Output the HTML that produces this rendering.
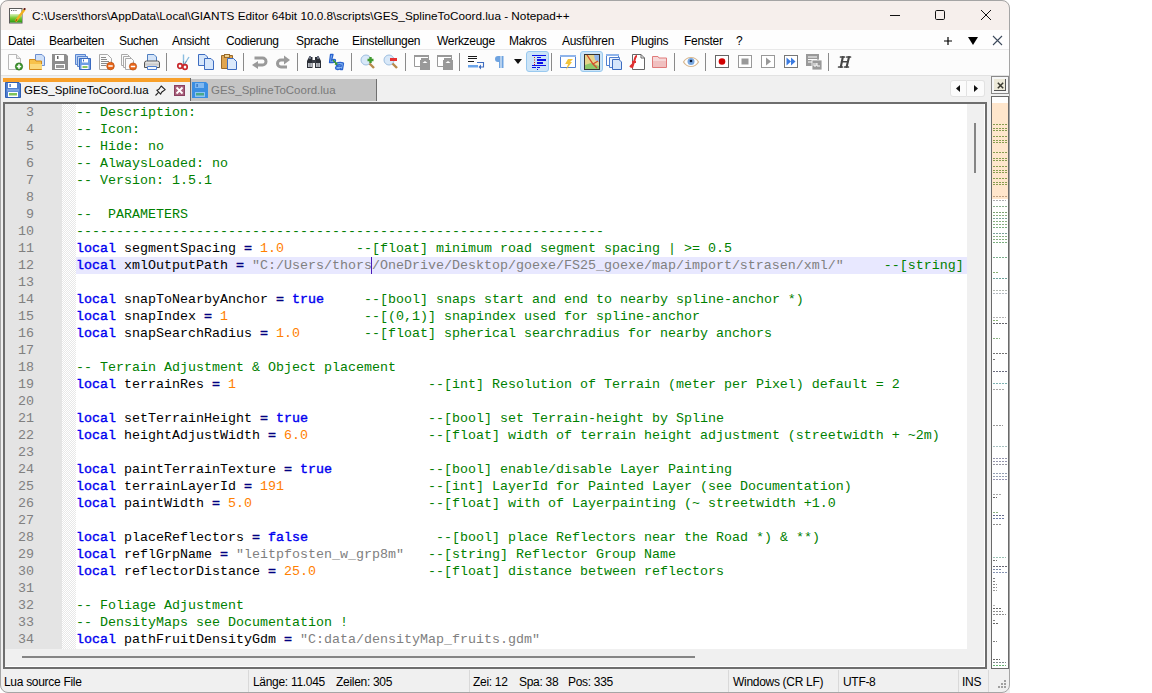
<!DOCTYPE html>
<html><head><meta charset="utf-8">
<style>
*{box-sizing:border-box}
html,body{margin:0;padding:0}
body{width:1152px;height:693px;background:#fff;position:relative;overflow:hidden;font-family:"Liberation Sans",sans-serif;font-size:11.5px;color:#000}
.a{position:absolute}
svg{position:absolute;overflow:visible}
#win{left:0;top:0;width:1010px;height:693px;background:#f0f0f0;border-radius:8px 8px 0 8px;overflow:hidden}
#wborder{left:0;top:0;width:1010px;height:693px;border:1px solid #a5a5a5;border-bottom-width:1px;border-radius:8px 8px 8px 8px;pointer-events:none}
#title{left:0;top:0;width:1010px;height:30px;background:#f6efec}
#ttext{left:32px;top:9px;font-size:11.75px;color:#000;white-space:nowrap}
#menu{left:0;top:30px;width:1010px;height:19px;background:#fefefe}
#menu span{position:absolute;top:4px;white-space:nowrap;font-size:12px;letter-spacing:-0.3px}
#tool{left:0;top:49px;width:1010px;height:27px;background:#fcfcfc;border-top:1px solid #e9e9e9;border-bottom:1px solid #e2e2e2}
.tsep{position:absolute;top:5px;width:1px;height:18px;background:#8a8a8a}
#tabs{left:0;top:76px;width:1010px;height:26px;background:#f0f0f0}
#frame{left:3px;top:102px;width:984px;height:567px;border:2px solid #6e6e6e;background:#fff}
#lnm{left:5px;top:104px;width:57px;height:545px;background:#e4e4e4}
#fold{left:62px;top:104px;width:14px;height:545px;background-color:#fff;background-image:linear-gradient(45deg,#e8e8e8 25%,transparent 25%,transparent 75%,#e8e8e8 75%),linear-gradient(45deg,#e8e8e8 25%,transparent 25%,transparent 75%,#e8e8e8 75%);background-size:2px 2px;background-position:0 0,1px 1px}
#code{left:76px;top:104px;width:891px;height:545px;overflow:hidden;font-family:"Liberation Mono",monospace;font-size:13.333px;line-height:17px;white-space:pre;color:#000}
#code div{height:17px}
#code div.cur{background:#e8e8ff}
#nums{left:4px;top:104px;width:30px;font-family:"Liberation Mono",monospace;font-size:13.333px;line-height:17px;color:#808080;text-align:right}
#nums div{height:17px}
i{font-style:normal}
i.c{color:#008000}
i.k{color:#0000f0;font-weight:normal;-webkit-text-stroke:0.4px #0000f0}
i.o{color:#000080;font-weight:normal;-webkit-text-stroke:0.4px #000080}
i.n{color:#ff8000}
i.s{color:#808080}
#caret{left:371px;top:257px;width:1px;height:17px;background:#4a1ab8}
#vsb{left:967px;top:104px;width:17px;height:545px;background:#f0f0f0}
#vthumb{left:974px;top:123px;width:2px;height:50px;background:#858585}
#hsb{left:5px;top:649px;width:979px;height:17px;background:#f0f0f0}
#wl1{left:984px;top:104px;width:1px;height:563px;background:#fff}
#wl2{left:5px;top:666px;width:980px;height:1px;background:#fff}
#hthumb{left:22px;top:656px;width:673px;height:2px;background:#858585}
#status{left:0;top:669px;width:1010px;height:24px;background:#f0f0f0}
#status span{position:absolute;top:6px;white-space:nowrap;font-size:12px;letter-spacing:-0.3px}
.sep{position:absolute;top:1px;width:1px;height:22px;background:#d9d9d9}
#dmap{left:991px;top:96px;width:18px;height:573px;border:1px solid #6a6a6a;background:#fff;overflow:hidden}
#dmap div{opacity:0.8}
</style></head><body>
<div id="win" class="a">
  <div id="title" class="a">
    <svg style="left:9px;top:7px" width="17" height="17" viewBox="0 0 17 17">
      <defs><linearGradient id="gg" x1="0" y1="0" x2="0" y2="1"><stop offset="0" stop-color="#d8f0b8"/><stop offset="0.45" stop-color="#7ccc3a"/><stop offset="1" stop-color="#2a9a10"/></linearGradient></defs>
      <rect x="0.5" y="1.5" width="12.5" height="14.5" fill="#fff" stroke="#5a5a5a"/>
      <rect x="1" y="7" width="12" height="8.5" fill="url(#gg)"/>
      <path d="M2 3.5h1.2M4.2 3.5h1.2M6.4 3.5h1.2" stroke="#666" stroke-width="1"/>
      <path d="M6.5 14.5 L15.5 2.5" stroke="#f0b020" stroke-width="2.4"/>
      <path d="M6.5 14.5 L8 12.3" stroke="#8a5a10" stroke-width="1.2"/>
      <circle cx="15.6" cy="2" r="1.1" fill="#5a0a0a"/>
    </svg>
    <div id="ttext" class="a">C:\Users\thors\AppData\Local\GIANTS Editor 64bit 10.0.8\scripts\GES_SplineToCoord.lua - Notepad++</div>
    <svg style="left:890px;top:10px" width="10" height="10" viewBox="0 0 10 10"><path d="M0 5.5H10" stroke="#111" stroke-width="1"/></svg>
    <svg style="left:935px;top:10px" width="10" height="10" viewBox="0 0 10 10"><rect x="0.5" y="0.5" width="9" height="9" rx="1.2" fill="none" stroke="#111" stroke-width="1"/></svg>
    <svg style="left:981px;top:10px" width="10" height="10" viewBox="0 0 10 10"><path d="M0 0L10 10M10 0L0 10" stroke="#111" stroke-width="1"/></svg>
  </div>
  <div id="menu" class="a">
    <span style="left:8px">Datei</span>
    <span style="left:49px">Bearbeiten</span>
    <span style="left:119px">Suchen</span>
    <span style="left:172px">Ansicht</span>
    <span style="left:226px">Codierung</span>
    <span style="left:296px">Sprache</span>
    <span style="left:352px">Einstellungen</span>
    <span style="left:437px">Werkzeuge</span>
    <span style="left:509px">Makros</span>
    <span style="left:562px">Ausführen</span>
    <span style="left:631px">Plugins</span>
    <span style="left:684px">Fenster</span>
    <span style="left:736px">?</span>
    <svg style="left:944px;top:7px" width="8" height="8" viewBox="0 0 8 8"><path d="M4 0V8M0 4H8" stroke="#000" stroke-width="1.2"/></svg>
    <svg style="left:968px;top:7px" width="10" height="8" viewBox="0 0 10 8"><path d="M0 0H10L5 8Z" fill="#000"/></svg>
    <svg style="left:993px;top:6px" width="9" height="9" viewBox="0 0 9 9"><path d="M0 0L9 9M9 0L0 9" stroke="#3d4a5c" stroke-width="1.1"/></svg>
  </div>
  <div id="tool" class="a"></div>
  <svg style="left:7px;top:54px" width="16" height="16" viewBox="0 0 16 16"><path d="M1.5 0.5H9.5L13.5 4.5V15.5H1.5Z" fill="#fdfdfd" stroke="#b8b8b8"/><path d="M9.5 0.5V4.5H13.5" fill="#e8e8e8" stroke="#b8b8b8"/><circle cx="12" cy="12.5" r="3.6" fill="#3c9a2c" stroke="#2a6e1e" stroke-width="0.8"/><path d="M12 10.3V14.7M9.8 12.5H14.2" stroke="#fff" stroke-width="1.6"/></svg>
<svg style="left:29px;top:54px" width="16" height="16" viewBox="0 0 16 16"><path d="M6.5 0.5H13L15.5 3V11.5H6.5Z" fill="#cfe0f8" stroke="#6d8fd0"/><path d="M0.5 5.5H6L7 7H12.5V15.5H0.5Z" fill="#f7c24a" stroke="#d08a1c"/><path d="M1 10H13V15H1Z" fill="#fbd97a"/></svg>
<svg style="left:52px;top:54px" width="16" height="16" viewBox="0 0 16 16"><path d="M0 0H14L16 2V16H0Z" fill="#8e8e8e"/><rect x="3" y="1" width="9" height="6" fill="#fff"/><rect x="5" y="2" width="1.5" height="3" fill="#666"/><rect x="3" y="10" width="10" height="5" fill="#fff"/><rect x="4" y="11" width="8" height="3" fill="#9a9a9a"/></svg>
<svg style="left:75px;top:54px" width="16" height="16" viewBox="0 0 16 16"><path d="M0.5 0.5H10.5V10.5H0.5Z" fill="#b8d0f4" stroke="#5a86d0"/><path d="M2.5 2.5H12.5V12.5H2.5Z" fill="#c0d6f4" stroke="#5a86d0"/><path d="M4.5 4.5H15.5V15.5H4.5Z" fill="#6d9ee4" stroke="#3a6ac0"/><rect x="7" y="5" width="6" height="3.5" fill="#fff"/><rect x="8" y="5.5" width="1" height="2" fill="#3a6ac0"/><rect x="6.5" y="11" width="7" height="4" fill="#fff"/><rect x="7.5" y="12" width="5" height="2" fill="#8cc860"/></svg>
<svg style="left:99px;top:54px" width="16" height="16" viewBox="0 0 16 16"><path d="M0.5 0.5H8.5L12.5 4.5V15.5H0.5Z" fill="#fbfbfb" stroke="#a9a9a9"/><path d="M2 3.5H7M2 5.5H8M2 7.5H10M2 9.5H8M2 11.5H7" stroke="#8a8a8a" stroke-width="1"/><circle cx="11.5" cy="12" r="3.8" fill="#e8661a" stroke="#b54a0c" stroke-width="0.7"/><path d="M9.3 12H13.7" stroke="#fff" stroke-width="1.6"/></svg>
<svg style="left:121px;top:54px" width="16" height="16" viewBox="0 0 16 16"><path d="M0.5 0.5H6.5L8.5 2.5V11.5H0.5Z" fill="#fbfbfb" stroke="#aaa"/><path d="M2.5 2.5H8.5L10.5 4.5V13.5H2.5Z" fill="#fbfbfb" stroke="#aaa"/><path d="M4.5 4.5H10.5L12.5 6.5V15.5H4.5Z" fill="#fbfbfb" stroke="#aaa"/><circle cx="12" cy="12.5" r="3.6" fill="#e8661a" stroke="#b54a0c" stroke-width="0.7"/><path d="M9.8 12.5H14.2" stroke="#fff" stroke-width="1.6"/></svg>
<svg style="left:144px;top:54px" width="16" height="16" viewBox="0 0 16 16"><defs><linearGradient id="pg" x1="0" y1="0" x2="0" y2="1"><stop offset="0" stop-color="#fafafa"/><stop offset="0.5" stop-color="#c8c8c8"/><stop offset="1" stop-color="#eee"/></linearGradient></defs><path d="M3.5 0.5H10L12.5 3V7.5H3.5Z" fill="#d4e4f8" stroke="#4f7fc0"/><path d="M0.5 9A2 2 0 0 1 2.5 7H13.5A2 2 0 0 1 15.5 9V13.5H0.5Z" fill="url(#pg)" stroke="#555"/><path d="M3.5 12.5H12.5V15.5H3.5Z" fill="#f4f8fc" stroke="#4f7fd0"/></svg>
<div class="tsep" style="left:166px;top:53px"></div>
<svg style="left:175px;top:54px" width="16" height="16" viewBox="0 0 16 16"><path d="M8.5 0.5V11M14 3L9 11" stroke="#8abde0" stroke-width="1.4"/><path d="M8.5 7V11M11.5 7L9 11" stroke="#6a8aa0" stroke-width="0.7"/><ellipse cx="5" cy="12" rx="2.2" ry="2.4" fill="none" stroke="#c8282c" stroke-width="1.7"/><ellipse cx="10" cy="13" rx="2.2" ry="2.4" fill="none" stroke="#c8282c" stroke-width="1.7"/></svg>
<svg style="left:198px;top:54px" width="16" height="16" viewBox="0 0 16 16"><path d="M0.5 0.5H7L9.5 3V11.5H0.5Z" fill="#d6e6fa" stroke="#3d6cc0"/><path d="M6.5 4.5H13L15.5 7V15.5H6.5Z" fill="#d6e6fa" stroke="#3d6cc0"/></svg>
<svg style="left:221px;top:54px" width="16" height="16" viewBox="0 0 16 16"><path d="M0.5 1.5H11.5V14.5H0.5Z" fill="#e0a550" stroke="#9a6a2a"/><rect x="3.5" y="0.5" width="5" height="3" fill="#f2d28c" stroke="#9a6a2a"/><path d="M6.5 4.5H12.5L15.5 7.5V15.5H6.5Z" fill="#dbe9fb" stroke="#3d6cc0"/></svg>
<div class="tsep" style="left:243px;top:53px"></div>
<svg style="left:252px;top:54px" width="16" height="16" viewBox="0 0 16 16"><path d="M2.5 4H10.5A3.5 3.5 0 0 1 10.5 11H6" fill="none" stroke="#9a9a9a" stroke-width="3"/><path d="M0 11L6 7V15Z" fill="#9a9a9a"/></svg>
<svg style="left:275px;top:54px" width="16" height="16" viewBox="0 0 16 16"><path d="M10 6H6A3.5 3.5 0 0 0 6 13H12" fill="none" stroke="#9a9a9a" stroke-width="3"/><path d="M15 6L9 1.5V10.5Z" fill="#9a9a9a"/></svg>
<div class="tsep" style="left:297px;top:53px"></div>
<svg style="left:307px;top:56px" width="14" height="12" viewBox="0 0 14 12"><path d="M1 3L2 1H5.5V12H0V5Z" fill="#2a2e36"/><path d="M13 3L12 1H8V12H14V5Z" fill="#2a2e36"/><rect x="5" y="4" width="4" height="3" fill="#3a3e46"/><rect x="1" y="7" width="4" height="4" fill="#b8bcc4"/><rect x="9" y="7" width="4" height="4" fill="#b8bcc4"/><path d="M3 7V11M11 7V11" stroke="#666" stroke-width="0.6"/><rect x="2" y="0" width="2" height="3" fill="#6a7080"/><rect x="10" y="0" width="2" height="3" fill="#6a7080"/></svg>
<svg style="left:329px;top:54px" width="16" height="16" viewBox="0 0 16 16"><path d="M1.5 0.5H4L2.5 6.5C3.5 5.2 6.5 5 6.5 6.5C6.5 8 5.5 8.5 3.5 8.5H0.5Z" fill="#8ab8f0" stroke="#2a64d0" stroke-width="1.3" stroke-linejoin="round"/><path d="M7 9.5C9 8 14.5 8 14.5 9.5L13.5 15.5H11.5L11.8 14.5C10 16 6.5 15.8 6.5 14C6.5 12.5 9 12 12 12.3L12.3 11C11 10.5 9 10.8 7.5 11.5Z" fill="#8ab8f0" stroke="#2a64d0" stroke-width="1.3" stroke-linejoin="round"/><path d="M4 6L7.5 10" stroke="#3a9a2a" stroke-width="1.4"/><path d="M8.5 11L5.5 10.5L8 8Z" fill="#3a9a2a"/></svg>
<div class="tsep" style="left:351px;top:53px"></div>
<svg style="left:360px;top:54px" width="16" height="16" viewBox="0 0 16 16"><circle cx="6" cy="6" r="5" fill="#d8e8f8" stroke="#9fbfe0"/><path d="M9.5 9.5L14 14" stroke="#b88a4a" stroke-width="2.4"/><path d="M10.5 3V9M7.5 6H13.5" stroke="#3f9a2e" stroke-width="2.4"/></svg>
<svg style="left:383px;top:54px" width="16" height="16" viewBox="0 0 16 16"><circle cx="6" cy="6" r="5" fill="#d8e8f8" stroke="#9fbfe0"/><path d="M9.5 9.5L14 14" stroke="#b88a4a" stroke-width="2.4"/><rect x="7" y="4" width="7" height="3" fill="#e53030"/></svg>
<div class="tsep" style="left:405px;top:53px"></div>
<svg style="left:414px;top:54px" width="16" height="16" viewBox="0 0 16 16"><path d="M0.5 1.5H14.5V12.5H0.5Z" fill="#fff" stroke="#999"/><rect x="0" y="1" width="15" height="2" fill="#999"/><rect x="6" y="6" width="10" height="10" fill="#999"/><rect x="7" y="4" width="7" height="2" fill="#999"/><path d="M8.5 9L11 7L13.5 9Z" fill="#fff"/></svg>
<svg style="left:437px;top:54px" width="16" height="16" viewBox="0 0 16 16"><path d="M0.5 1.5H14.5V12.5H0.5Z" fill="#fff" stroke="#999"/><rect x="0" y="1" width="15" height="2" fill="#999"/><rect x="6" y="6" width="10" height="10" fill="#999"/><rect x="7" y="4" width="7" height="2" fill="#999"/><path d="M8.5 9L11 7L13.5 9Z" fill="#fff"/></svg>
<div class="tsep" style="left:459px;top:53px"></div>
<svg style="left:468px;top:54px" width="16" height="16" viewBox="0 0 16 16"><path d="M0 2.5H9M0 4.5H9M0 7.5H6" stroke="#1a1a1a" stroke-width="1"/><rect x="0" y="11" width="10" height="2.5" fill="#6aa4ea"/><path d="M9 8.5H15.5V13H12" fill="none" stroke="#3d6cc0" stroke-width="1.1"/><path d="M10.5 13L13 10.5V15.5Z" fill="#3d6cc0"/></svg>
<svg style="left:491px;top:54px" width="16" height="16" viewBox="0 0 16 16"><path d="M9 2H7A3 3 0 0 0 7 8H8V14H9.5V2Z" fill="#6ea3e0"/><rect x="10.5" y="2" width="2" height="12" fill="#6ea3e0"/></svg>
<svg style="left:514px;top:59px" width="8" height="5" viewBox="0 0 8 5"><path d="M0 0H8L4 5Z" fill="#111"/></svg>
<div class="a" style="left:526px;top:51px;width:23px;height:21px;background:#cce4f7;border:1px solid #99c9ef;border-radius:3px"></div>
<svg style="left:531px;top:54px" width="16" height="16" viewBox="0 0 16 16"><g fill="#0a10e8"><rect x="1" y="1" width="14" height="1"/><rect x="6" y="3" width="4" height="1"/><rect x="6" y="5" width="9" height="2"/><rect x="6" y="8" width="6" height="2"/><rect x="1" y="11" width="14" height="1"/><rect x="1" y="13" width="4" height="1"/><rect x="6" y="13" width="3" height="1"/><rect x="6" y="15" width="1" height="1"/></g><g fill="#d02020"><rect x="3" y="3" width="1" height="1"/><rect x="3" y="5.5" width="1" height="1"/><rect x="3" y="8" width="1" height="1"/><rect x="3" y="10" width="1" height="1"/></g></svg>
<div class="tsep" style="left:551px;top:53px"></div>
<svg style="left:560px;top:54px" width="16" height="16" viewBox="0 0 16 16"><path d="M0.5 1.5H15.5V13.5H0.5Z" fill="#fff" stroke="#4f7fd0"/><rect x="0" y="1" width="16" height="2" fill="#8fb4ea"/><path d="M4 12L8 5H13L10 8H12L6 16L8 10H5Z" fill="#f2c33a"/></svg>
<div class="a" style="left:580px;top:51px;width:23px;height:21px;background:#cce4f7;border:1px solid #99c9ef;border-radius:3px"></div>
<svg style="left:584px;top:54px" width="16" height="16" viewBox="0 0 16 16"><rect x="0.5" y="0.5" width="15" height="15" fill="#e6d48a" stroke="#333"/><path d="M1 11L7 9L15 12V15H1Z" fill="#8cc86a"/><path d="M10 1H15V8L11 6Z" fill="#8fb4ea"/><path d="M3 1L9 10L13 14M9 10L14 7" stroke="#d44a2a" stroke-width="1.3" fill="none"/></svg>
<svg style="left:606px;top:54px" width="16" height="16" viewBox="0 0 16 16"><path d="M0.5 0.5H12.5V11.5H0.5Z" fill="#fff" stroke="#4f7fd0"/><rect x="0" y="0" width="13" height="2" fill="#8fb4ea"/><path d="M3.5 3.5H13.5V13.5H3.5Z" fill="#eaf2fd" stroke="#4f7fd0"/><path d="M6.5 5.5H13L15.5 8V15.5H6.5Z" fill="#d6e6fa" stroke="#3d6cc0"/></svg>
<svg style="left:629px;top:54px" width="16" height="16" viewBox="0 0 16 16"><path d="M3.5 0.5H12L15.5 4V15.5H3.5Z" fill="#fff" stroke="#666"/><path d="M12 0.5V4H15.5" fill="none" stroke="#666"/><path d="M1 13L4 10M8 2C6 2 6 5 5 8L3 14M3 8H7" stroke="#e03030" stroke-width="2" fill="none"/></svg>
<svg style="left:652px;top:54px" width="16" height="16" viewBox="0 0 16 16"><path d="M0.5 2.5H6L7 4H14.5V13.5H0.5Z" fill="#f6d8d8" stroke="#e07a7a"/><rect x="1" y="7" width="13" height="6" fill="#f0c0c0"/></svg>
<div class="tsep" style="left:674px;top:53px"></div>
<svg style="left:683px;top:54px" width="16" height="16" viewBox="0 0 16 16"><path d="M0.5 8C4 2 12 2 15.5 8C12 14 4 14 0.5 8Z" fill="#fff" stroke="#d8b890" stroke-width="1.2"/><circle cx="8" cy="7.5" r="3.5" fill="#7aa8e0"/><circle cx="8" cy="7" r="1.3" fill="#0a1a3a"/></svg>
<div class="tsep" style="left:705px;top:53px"></div>
<svg style="left:714px;top:54px" width="16" height="16" viewBox="0 0 16 16"><rect x="1.5" y="1.5" width="13" height="12" fill="#fff" stroke="#666"/><circle cx="8" cy="7.5" r="3.3" fill="#d00000"/></svg>
<svg style="left:737px;top:54px" width="16" height="16" viewBox="0 0 16 16"><rect x="1.5" y="1.5" width="13" height="12" fill="#fff" stroke="#999"/><rect x="4.5" y="4.5" width="7" height="6" fill="#999"/></svg>
<svg style="left:760px;top:54px" width="16" height="16" viewBox="0 0 16 16"><rect x="1.5" y="1.5" width="13" height="12" fill="#fff" stroke="#999"/><path d="M6 3.5L11 7.5L6 11.5Z" fill="#999"/></svg>
<svg style="left:783px;top:54px" width="16" height="16" viewBox="0 0 16 16"><rect x="1.5" y="1.5" width="13" height="12" fill="#fff" stroke="#777"/><path d="M3.5 3.5L8 7.5L3.5 11.5Z M8 3.5L12.5 7.5L8 11.5Z" fill="#3a7ae0"/></svg>
<svg style="left:806px;top:54px" width="16" height="16" viewBox="0 0 16 16"><rect x="0" y="0" width="13" height="12" fill="#999"/><path d="M2 3H11M2 5.5H11M2 8H6" stroke="#fff" stroke-width="1"/><rect x="6" y="6" width="10" height="10" fill="#999" stroke="#fff" stroke-width="0.8"/><path d="M8 9V12H10V9M11 9V12H14" stroke="#fff" stroke-width="1" fill="none"/></svg>
<div class="tsep" style="left:828px;top:53px"></div>
<svg style="left:838px;top:56px" width="13" height="12" viewBox="0 0 13 12"><g stroke="#464646" stroke-linecap="round" fill="none"><path d="M2.5 1H6.5M8.8 1H12.5M0.6 11H4.4M6.6 11H10.4" stroke-width="1.7"/><path d="M4.8 1L2.8 11M11 1L8.6 11" stroke-width="2.1"/><path d="M3.6 5.8H9.8" stroke-width="1.6"/></g></svg>

  <div id="tabs" class="a"></div>
  <div class="a" style="left:3px;top:78px;width:188px;height:23px;background:#f2f2f2"></div>
<div class="a" style="left:3px;top:78px;width:187px;height:4px;background:#f8a02a"></div>
<div class="a" style="left:190px;top:78px;width:1px;height:23px;background:#6a6a6a"></div>
<svg style="left:5px;top:82px" width="16" height="16" viewBox="0 0 16 16"><path d="M0.5 0.5H14L15.5 2V15.5H0.5Z" fill="#4f7fd0" stroke="#2f5fb3"/><rect x="3" y="1" width="9" height="5" fill="#fff"/><rect x="4.5" y="2" width="1.2" height="3" fill="#2f5fb3"/><rect x="2" y="7" width="12" height="2.5" fill="#7aa2e2"/><rect x="3" y="10" width="10" height="5" fill="#fff"/><rect x="4" y="11" width="8" height="2.5" fill="#7ec25a"/></svg>
<div class="a" style="left:24px;top:84px;font-size:11.5px;white-space:nowrap;color:#000">GES_SplineToCoord.lua</div>
<svg style="left:155px;top:85px" width="11" height="11" viewBox="0 0 11 11"><path d="M0.5 10.5L3.8 7.2" stroke="#222" stroke-width="1.1"/><path d="M1.8 5.2L3.6 4.6L6.2 1L10.2 4.6L6.6 7.3L5.6 9.2Z" fill="#f4f4f4" stroke="#222" stroke-width="1.1" stroke-linejoin="round"/></svg>
<div class="a" style="left:174px;top:85px;width:11px;height:11px;background:#a8607a;border:1px solid #8a4060"></div>
<svg style="left:174px;top:85px" width="11" height="11" viewBox="0 0 11 11"><path d="M2.5 2.5L8.5 8.5M8.5 2.5L2.5 8.5" stroke="#fff" stroke-width="1.8"/></svg>
<div class="a" style="left:191px;top:79px;width:186px;height:22px;background:#c4c4c4;border-right:1px solid #707070"></div>
<svg style="left:192px;top:82px" width="16" height="16" viewBox="0 0 16 16"><path d="M0 0H14L16 2V16H0Z" fill="#3a8ee2"/><rect x="3" y="1" width="9" height="5" fill="#7fb8f0"/><rect x="4.5" y="2" width="1.2" height="3" fill="#2a6ab8"/><rect x="3" y="10" width="10" height="5" fill="#8ec4f2"/><rect x="4" y="11" width="8" height="2.5" fill="#4aa88a"/></svg>
<div class="a" style="left:211px;top:84px;font-size:11.5px;white-space:nowrap;color:#7a7a7a">GES_SplineToCoord.lua</div>
<div class="a" style="left:950px;top:80px;width:17px;height:17px;background:#fbfbfb;border:1px solid #e2e2e2;border-radius:3px 0 0 3px"></div>
<div class="a" style="left:967px;top:80px;width:18px;height:17px;background:#fbfbfb;border:1px solid #e2e2e2;border-left:none;border-radius:0 3px 3px 0"></div>
<svg style="left:956px;top:85px" width="4" height="7" viewBox="0 0 4 7"><path d="M4 0V7L0 3.5Z" fill="#111"/></svg>
<svg style="left:974px;top:85px" width="4" height="7" viewBox="0 0 4 7"><path d="M0 0V7L4 3.5Z" fill="#111"/></svg>
<div class="a" style="left:991px;top:76px;width:18px;height:18px;border:1px solid #8a8a8a;background:#f6f6f6"></div>
<div class="a" style="left:994px;top:79px;width:12px;height:12px;background:#ece9d8;border-right:1px solid #555;border-bottom:1px solid #555"></div>
<svg style="left:997px;top:82px" width="7" height="7" viewBox="0 0 7 7"><path d="M0.8 0.8L6.2 6.2M6.2 0.8L0.8 6.2" stroke="#3a3a30" stroke-width="1.5"/></svg>

  <div id="frame" class="a"></div>
  <div id="lnm" class="a"></div>
  <div id="fold" class="a"></div>
  <div id="nums" class="a"><div>3</div><div>4</div><div>5</div><div>6</div><div>7</div><div>8</div><div>9</div><div>10</div><div>11</div><div>12</div><div>13</div><div>14</div><div>15</div><div>16</div><div>17</div><div>18</div><div>19</div><div>20</div><div>21</div><div>22</div><div>23</div><div>24</div><div>25</div><div>26</div><div>27</div><div>28</div><div>29</div><div>30</div><div>31</div><div>32</div><div>33</div><div>34</div></div>
  <div id="code" class="a"><div><i class="c">-- Description:</i></div><div><i class="c">-- Icon:</i></div><div><i class="c">-- Hide: no</i></div><div><i class="c">-- AlwaysLoaded: no</i></div><div><i class="c">-- Version: 1.5.1</i></div><div></div><div><i class="c">--  PARAMETERS</i></div><div><i class="c">------------------------------------------------------------------</i></div><div><i class="k">local</i> segmentSpacing <i class="o">=</i> <i class="n">1.0</i>         <i class="c">--[float] minimum road segment spacing | &gt;= 0.5</i></div><div class="cur"><i class="k">local</i> xmlOutputPath <i class="o">=</i> <i class="s">&quot;C:/Users/thors/OneDrive/Desktop/goexe/FS25_goexe/map/import/strasen/xml/&quot;</i>     <i class="c">--[string]</i></div><div></div><div><i class="k">local</i> snapToNearbyAnchor <i class="o">=</i> <i class="k">true</i>     <i class="c">--[bool] snaps start and end to nearby spline-anchor *)</i></div><div><i class="k">local</i> snapIndex <i class="o">=</i> <i class="n">1</i>                 <i class="c">--[(0,1)] snapindex used for spline-anchor</i></div><div><i class="k">local</i> snapSearchRadius <i class="o">=</i> <i class="n">1.0</i>        <i class="c">--[float] spherical searchradius for nearby anchors</i></div><div></div><div><i class="c">-- Terrain Adjustment &amp; Object placement</i></div><div><i class="k">local</i> terrainRes <i class="o">=</i> <i class="n">1</i>                        <i class="c">--[int] Resolution of Terrain (meter per Pixel) default = 2</i></div><div></div><div><i class="k">local</i> setTerrainHeight <i class="o">=</i> <i class="k">true</i>               <i class="c">--[bool] set Terrain-height by Spline</i></div><div><i class="k">local</i> heightAdjustWidth <i class="o">=</i> <i class="n">6.0</i>               <i class="c">--[float] width of terrain height adjustment (streetwidth + ~2m)</i></div><div></div><div><i class="k">local</i> paintTerrainTexture <i class="o">=</i> <i class="k">true</i>            <i class="c">--[bool] enable/disable Layer Painting</i></div><div><i class="k">local</i> terrainLayerId <i class="o">=</i> <i class="n">191</i>                  <i class="c">--[int] LayerId for Painted Layer (see Documentation)</i></div><div><i class="k">local</i> paintWidth <i class="o">=</i> <i class="n">5.0</i>                      <i class="c">--[float] with of Layerpainting (~ streetwidth +1.0</i></div><div></div><div><i class="k">local</i> placeReflectors <i class="o">=</i> <i class="k">false</i>                <i class="c">--[bool] place Reflectors near the Road *) &amp; **)</i></div><div><i class="k">local</i> reflGrpName <i class="o">=</i> <i class="s">&quot;leitpfosten_w_grp8m&quot;</i>   <i class="c">--[string] Reflector Group Name</i></div><div><i class="k">local</i> reflectorDistance <i class="o">=</i> <i class="n">25.0</i>              <i class="c">--[float] distance between reflectors</i></div><div></div><div><i class="c">-- Foliage Adjustment</i></div><div><i class="c">-- DensityMaps see Documentation !</i></div><div><i class="k">local</i> pathFruitDensityGdm <i class="o">=</i> <i class="s">&quot;C:data/densityMap_fruits.gdm&quot;</i></div></div>
  <div id="caret" class="a"></div>
  <div id="vsb" class="a"></div>
  <div id="vthumb" class="a"></div>
  <div id="hsb" class="a"></div>
  <div id="hthumb" class="a"></div>
  <div id="wl1" class="a"></div><div id="wl2" class="a"></div>
  <div id="dmap" class="a"><div class="a" style="left:0px;top:6px;width:16px;height:96px;opacity:1;background:#ffe6cc"></div><div class="a" style="left:1px;top:27px;width:14px;height:1px;background:repeating-linear-gradient(90deg,#6a8a30 0 2px,transparent 2px 3px)"></div><div class="a" style="left:1px;top:31px;width:14px;height:1px;background:repeating-linear-gradient(90deg,#6a8a30 0 2px,transparent 2px 3px)"></div><div class="a" style="left:1px;top:33px;width:14px;height:1px;background:repeating-linear-gradient(90deg,#6a8a30 0 2px,transparent 2px 3px)"></div><div class="a" style="left:1px;top:39px;width:14px;height:1px;background:repeating-linear-gradient(90deg,#6a8a30 0 2px,transparent 2px 3px)"></div><div class="a" style="left:1px;top:43px;width:14px;height:1px;background:repeating-linear-gradient(90deg,#6a8a30 0 2px,transparent 2px 3px)"></div><div class="a" style="left:1px;top:45px;width:14px;height:1px;background:repeating-linear-gradient(90deg,#6a8a30 0 2px,transparent 2px 3px)"></div><div class="a" style="left:1px;top:55px;width:14px;height:1px;background:repeating-linear-gradient(90deg,#6a8a30 0 2px,transparent 2px 3px)"></div><div class="a" style="left:1px;top:61px;width:14px;height:1px;background:repeating-linear-gradient(90deg,#6a8a30 0 2px,transparent 2px 3px)"></div><div class="a" style="left:1px;top:63px;width:14px;height:1px;background:repeating-linear-gradient(90deg,#6a8a30 0 2px,transparent 2px 3px)"></div><div class="a" style="left:1px;top:69px;width:14px;height:1px;background:repeating-linear-gradient(90deg,#6a8a30 0 2px,transparent 2px 3px)"></div><div class="a" style="left:1px;top:73px;width:14px;height:1px;background:repeating-linear-gradient(90deg,#6a8a30 0 2px,transparent 2px 3px)"></div><div class="a" style="left:1px;top:75px;width:14px;height:1px;background:repeating-linear-gradient(90deg,#6a8a30 0 2px,transparent 2px 3px)"></div><div class="a" style="left:1px;top:81px;width:14px;height:1px;background:repeating-linear-gradient(90deg,#6a8a30 0 2px,transparent 2px 3px)"></div><div class="a" style="left:1px;top:85px;width:14px;height:1px;background:repeating-linear-gradient(90deg,#6a8a30 0 2px,transparent 2px 3px)"></div><div class="a" style="left:1px;top:87px;width:14px;height:1px;background:repeating-linear-gradient(90deg,#6a8a30 0 2px,transparent 2px 3px)"></div><div class="a" style="left:1px;top:99px;width:14px;height:1px;background:repeating-linear-gradient(90deg,#b09070 0 2px,transparent 2px 3px)"></div><div class="a" style="left:1px;top:103px;width:13px;height:1px;background:repeating-linear-gradient(90deg,#9a9aa0 0 2px,transparent 2px 3px)"></div><div class="a" style="left:1px;top:109px;width:14px;height:1px;background:repeating-linear-gradient(90deg,#6a9a70 0 2px,transparent 2px 3px)"></div><div class="a" style="left:1px;top:115px;width:14px;height:1px;background:repeating-linear-gradient(90deg,#5a8a50 0 2px,transparent 2px 3px)"></div><div class="a" style="left:1px;top:118px;width:14px;height:1px;background:repeating-linear-gradient(90deg,#6a9a60 0 2px,transparent 2px 3px)"></div><div class="a" style="left:1px;top:121px;width:14px;height:1px;background:repeating-linear-gradient(90deg,#5a8a80 0 2px,transparent 2px 3px)"></div><div class="a" style="left:1px;top:124px;width:14px;height:1px;background:repeating-linear-gradient(90deg,#6a9a60 0 2px,transparent 2px 3px)"></div><div class="a" style="left:1px;top:127px;width:14px;height:1px;background:repeating-linear-gradient(90deg,#6a9a60 0 2px,transparent 2px 3px)"></div><div class="a" style="left:1px;top:130px;width:14px;height:1px;background:repeating-linear-gradient(90deg,#5a9a60 0 2px,transparent 2px 3px)"></div><div class="a" style="left:1px;top:136px;width:14px;height:1px;background:repeating-linear-gradient(90deg,#5a8a80 0 2px,transparent 2px 3px)"></div><div class="a" style="left:1px;top:139px;width:14px;height:1px;background:repeating-linear-gradient(90deg,#6a9a60 0 2px,transparent 2px 3px)"></div><div class="a" style="left:1px;top:142px;width:14px;height:1px;background:repeating-linear-gradient(90deg,#6a9a60 0 2px,transparent 2px 3px)"></div><div class="a" style="left:1px;top:145px;width:14px;height:1px;background:repeating-linear-gradient(90deg,#5a9a60 0 2px,transparent 2px 3px)"></div><div class="a" style="left:1px;top:160px;width:14px;height:1px;background:repeating-linear-gradient(90deg,#5a9a70 0 2px,transparent 2px 3px)"></div><div class="a" style="left:1px;top:175px;width:6px;height:1px;background:repeating-linear-gradient(90deg,#6a9a50 0 2px,transparent 2px 3px)"></div><div class="a" style="left:1px;top:181px;width:14px;height:1px;background:repeating-linear-gradient(90deg,#4a8a80 0 2px,transparent 2px 3px)"></div><div class="a" style="left:1px;top:193px;width:14px;height:1px;background:repeating-linear-gradient(90deg,#a0a8a0 0 2px,transparent 2px 3px)"></div><div class="a" style="left:1px;top:196px;width:14px;height:1px;background:repeating-linear-gradient(90deg,#a0a8b0 0 2px,transparent 2px 3px)"></div><div class="a" style="left:1px;top:220px;width:13px;height:1px;background:repeating-linear-gradient(90deg,#a0a0a0 0 2px,transparent 2px 3px)"></div><div class="a" style="left:1px;top:223px;width:5px;height:1px;background:repeating-linear-gradient(90deg,#6a9a50 0 2px,transparent 2px 3px)"></div><div class="a" style="left:1px;top:226px;width:14px;height:1px;background:repeating-linear-gradient(90deg,#404048 0 2px,transparent 2px 3px)"></div><div class="a" style="left:1px;top:241px;width:7px;height:1px;background:repeating-linear-gradient(90deg,#6a9a60 0 2px,transparent 2px 3px)"></div><div class="a" style="left:1px;top:256px;width:14px;height:1px;background:repeating-linear-gradient(90deg,#505050 0 2px,transparent 2px 3px)"></div><div class="a" style="left:1px;top:262px;width:2px;height:1px;background:repeating-linear-gradient(90deg,#505050 0 2px,transparent 2px 3px)"></div><div class="a" style="left:1px;top:274px;width:14px;height:1px;background:repeating-linear-gradient(90deg,#484a60 0 2px,transparent 2px 3px)"></div><div class="a" style="left:1px;top:286px;width:14px;height:1px;background:repeating-linear-gradient(90deg,#60a0a0 0 2px,transparent 2px 3px)"></div><div class="a" style="left:1px;top:292px;width:11px;height:1px;background:repeating-linear-gradient(90deg,#909090 0 2px,transparent 2px 3px)"></div><div class="a" style="left:1px;top:328px;width:10px;height:1px;background:repeating-linear-gradient(90deg,#808080 0 2px,transparent 2px 3px)"></div><div class="a" style="left:1px;top:349px;width:14px;height:1px;background:repeating-linear-gradient(90deg,#90b0b0 0 2px,transparent 2px 3px)"></div><div class="a" style="left:1px;top:361px;width:14px;height:1px;background:repeating-linear-gradient(90deg,#7a7a98 0 2px,transparent 2px 3px)"></div><div class="a" style="left:1px;top:364px;width:14px;height:1px;background:repeating-linear-gradient(90deg,#7a7a98 0 2px,transparent 2px 3px)"></div><div class="a" style="left:1px;top:367px;width:14px;height:1px;background:repeating-linear-gradient(90deg,#7a7a88 0 2px,transparent 2px 3px)"></div><div class="a" style="left:1px;top:376px;width:14px;height:1px;background:repeating-linear-gradient(90deg,#7a88a0 0 2px,transparent 2px 3px)"></div><div class="a" style="left:1px;top:379px;width:14px;height:1px;background:repeating-linear-gradient(90deg,#7a88a0 0 2px,transparent 2px 3px)"></div><div class="a" style="left:1px;top:382px;width:14px;height:1px;background:repeating-linear-gradient(90deg,#7a7aa0 0 2px,transparent 2px 3px)"></div><div class="a" style="left:1px;top:397px;width:9px;height:1px;background:repeating-linear-gradient(90deg,#909090 0 2px,transparent 2px 3px)"></div><div class="a" style="left:1px;top:400px;width:4px;height:1px;background:repeating-linear-gradient(90deg,#404040 0 2px,transparent 2px 3px)"></div><div class="a" style="left:1px;top:415px;width:5px;height:1px;background:repeating-linear-gradient(90deg,#6a9a60 0 2px,transparent 2px 3px)"></div><div class="a" style="left:1px;top:418px;width:12px;height:1px;background:repeating-linear-gradient(90deg,#404870 0 2px,transparent 2px 3px)"></div><div class="a" style="left:1px;top:421px;width:12px;height:1px;background:repeating-linear-gradient(90deg,#4a5a90 0 2px,transparent 2px 3px)"></div><div class="a" style="left:1px;top:427px;width:9px;height:1px;background:repeating-linear-gradient(90deg,#707070 0 2px,transparent 2px 3px)"></div><div class="a" style="left:1px;top:460px;width:13px;height:1px;background:repeating-linear-gradient(90deg,#80b0a0 0 2px,transparent 2px 3px)"></div><div class="a" style="left:1px;top:463px;width:4px;height:1px;background:repeating-linear-gradient(90deg,#505050 0 2px,transparent 2px 3px)"></div><div class="a" style="left:1px;top:469px;width:14px;height:1px;background:repeating-linear-gradient(90deg,#404050 0 2px,transparent 2px 3px)"></div><div class="a" style="left:1px;top:472px;width:9px;height:1px;background:repeating-linear-gradient(90deg,#5a6a90 0 2px,transparent 2px 3px)"></div><div class="a" style="left:1px;top:475px;width:14px;height:1px;background:repeating-linear-gradient(90deg,#6a7aa0 0 2px,transparent 2px 3px)"></div><div class="a" style="left:1px;top:481px;width:2px;height:1px;background:repeating-linear-gradient(90deg,#606060 0 2px,transparent 2px 3px)"></div><div class="a" style="left:1px;top:484px;width:2px;height:1px;background:repeating-linear-gradient(90deg,#606060 0 2px,transparent 2px 3px)"></div><div class="a" style="left:1px;top:487px;width:4px;height:1px;background:repeating-linear-gradient(90deg,#707070 0 2px,transparent 2px 3px)"></div><div class="a" style="left:1px;top:490px;width:4px;height:1px;background:repeating-linear-gradient(90deg,#707070 0 2px,transparent 2px 3px)"></div><div class="a" style="left:1px;top:493px;width:4px;height:1px;background:repeating-linear-gradient(90deg,#808080 0 2px,transparent 2px 3px)"></div><div class="a" style="left:1px;top:508px;width:2px;height:1px;background:repeating-linear-gradient(90deg,#a0a0a0 0 2px,transparent 2px 3px)"></div><div class="a" style="left:1px;top:511px;width:8px;height:1px;background:repeating-linear-gradient(90deg,#404040 0 2px,transparent 2px 3px)"></div><div class="a" style="left:1px;top:514px;width:10px;height:1px;background:repeating-linear-gradient(90deg,#707070 0 2px,transparent 2px 3px)"></div><div class="a" style="left:1px;top:517px;width:13px;height:1px;background:repeating-linear-gradient(90deg,#707070 0 2px,transparent 2px 3px)"></div><div class="a" style="left:1px;top:523px;width:2px;height:1px;background:repeating-linear-gradient(90deg,#606060 0 2px,transparent 2px 3px)"></div><div class="a" style="left:1px;top:526px;width:6px;height:1px;background:repeating-linear-gradient(90deg,#404040 0 2px,transparent 2px 3px)"></div><div class="a" style="left:1px;top:544px;width:4px;height:1px;background:repeating-linear-gradient(90deg,#606060 0 2px,transparent 2px 3px)"></div><div class="a" style="left:1px;top:562px;width:7px;height:1px;background:repeating-linear-gradient(90deg,#404040 0 2px,transparent 2px 3px)"></div><div class="a" style="left:1px;top:565px;width:13px;height:1px;background:repeating-linear-gradient(90deg,#607070 0 2px,transparent 2px 3px)"></div><div class="a" style="left:1px;top:568px;width:13px;height:1px;background:repeating-linear-gradient(90deg,#40a050 0 2px,transparent 2px 3px)"></div></div>
  <div id="status" class="a">
    <span style="left:4px">Lua source File</span>
    <div class="sep" style="left:248px"></div>
    <span style="left:253px">Länge: 11.045</span>
    <span style="left:336px">Zeilen: 305</span>
    <div class="sep" style="left:469px"></div>
    <span style="left:473px">Zei: 12</span>
    <span style="left:519px">Spa: 38</span>
    <span style="left:568px">Pos: 335</span>
    <div class="sep" style="left:728px"></div>
    <span style="left:733px">Windows (CR LF)</span>
    <div class="sep" style="left:838px"></div>
    <span style="left:843px">UTF-8</span>
    <div class="sep" style="left:958px"></div>
    <span style="left:962px">INS</span>
    <div class="sep" style="left:988px"></div>
    <svg style="left:998px;top:11px" width="10" height="10" viewBox="0 0 10 10" fill="#a0a0a0"><rect x="6" y="0" width="2" height="2"/><rect x="3" y="3" width="2" height="2"/><rect x="6" y="3" width="2" height="2"/><rect x="0" y="6" width="2" height="2"/><rect x="3" y="6" width="2" height="2"/><rect x="6" y="6" width="2" height="2"/></svg>
  </div>
</div>
<div id="wborder" class="a"></div>
</body></html>
